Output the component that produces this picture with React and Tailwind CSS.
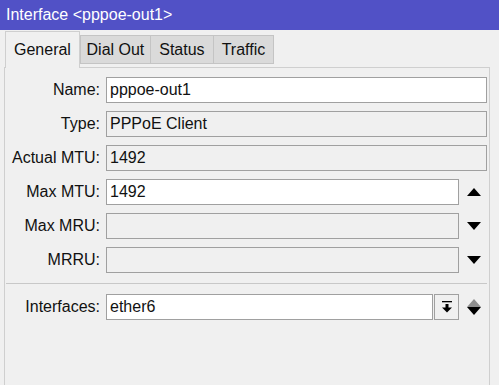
import React from "react";

const Up = ({ color = "#000" }) => (
  <svg width="14" height="8" viewBox="0 0 14 8"><polygon points="0,8 14,8 7,0" fill={color} /></svg>
);
const Down = ({ color = "#000" }) => (
  <svg width="14" height="8" viewBox="0 0 14 8"><polygon points="0,0 14,0 7,8" fill={color} /></svg>
);

function Row({ label, value, editable, right }) {
  return (
    <div className="flex items-center h-[26px]">
      <div className="w-[96px] text-right pr-[1px] text-[16px] text-[#111]">{label}</div>
      <div className="w-[5px]" />
      <div
        className={
          "flex-1 h-[26px] border border-[#a0a0a0] flex items-center pl-[3px] text-[16px] text-[#111] " +
          (editable ? "bg-white" : "bg-[#f0f0f0]")
        }
      >
        {value}
      </div>
      {right ? (
        <div className="w-[30px] flex items-center justify-center">{right}</div>
      ) : (
        <div className="w-[2px]" />
      )}
    </div>
  );
}

export default function App() {
  return (
    <div
      className="w-[499px] h-[385px] bg-[#f0f0f0] flex flex-col overflow-hidden"
      style={{ fontFamily: '"Liberation Sans", Arial, sans-serif' }}
    >
      <div className="h-[30px] bg-[#5151c6] text-white text-[16px] pl-[6px] flex items-center">
        Interface &lt;pppoe-out1&gt;
      </div>
      <div className="flex flex-col flex-1 pl-[4px] pr-[9px]">
        <div className="flex h-[37px] pl-[1px] pt-[1px]">
          <div className="relative z-10 h-[37px] -mb-[1px] bg-[#f0f0f0] border border-b-0 border-[#cfcfcf] px-[8px] flex items-center text-[16px] text-[#111]">
            General
          </div>
          <div className="mt-[4px] h-[29px] w-[71px] bg-[#dadada] border border-[#c4c4c4] flex items-center justify-center text-[16px] text-[#111]">
            Dial Out
          </div>
          <div className="mt-[4px] h-[29px] w-[63px] bg-[#dadada] border border-l-0 border-[#c4c4c4] flex items-center justify-center text-[16px] text-[#111]">
            Status
          </div>
          <div className="mt-[4px] h-[29px] w-[60px] bg-[#dadada] border border-l-0 border-[#c4c4c4] flex items-center justify-center text-[16px] text-[#111]">
            Traffic
          </div>
        </div>
        <div className="flex-1 border border-b-0 border-[#cfcfcf] pt-[9px] flex flex-col">
          <div className="flex flex-col gap-[8px]">
            <Row label="Name:" value="pppoe-out1" editable />
            <Row label="Type:" value="PPPoE Client" />
            <Row label="Actual MTU:" value="1492" />
            <Row label="Max MTU:" value="1492" editable right={<Up />} />
            <Row label="Max MRU:" value="" right={<Down />} />
            <Row label="MRRU:" value="" right={<Down />} />
          </div>
          <div className="mt-[10px] mx-[1px] mr-[2px] h-[1px] bg-[#c8c8c8]" />
          <div className="mt-[10px] flex items-center h-[26px]">
            <div className="w-[96px] text-right pr-[1px] text-[16px] text-[#111]">Interfaces:</div>
            <div className="w-[5px]" />
            <div className="flex-1 h-[26px] border border-[#a0a0a0] bg-white flex items-center pl-[3px] text-[16px] text-[#111]">
              ether6
            </div>
            <div className="ml-[1px] w-[25px] h-[26px] border border-[#a0a0a0] bg-[#f0f0f0] flex items-center justify-center">
              <svg width="12" height="14" viewBox="0 0 12 14">
                <rect x="1" y="1" width="10" height="1.3" fill="#000" />
                <rect x="4.5" y="4" width="3" height="4" fill="#000" />
                <polygon points="1,7.5 11,7.5 6,12.5" fill="#000" />
              </svg>
            </div>
            <div className="w-[30px] flex flex-col items-center justify-center">
              <Up color="#8e8e8e" />
              <Down />
            </div>
          </div>
        </div>
      </div>
    </div>
  );
}
